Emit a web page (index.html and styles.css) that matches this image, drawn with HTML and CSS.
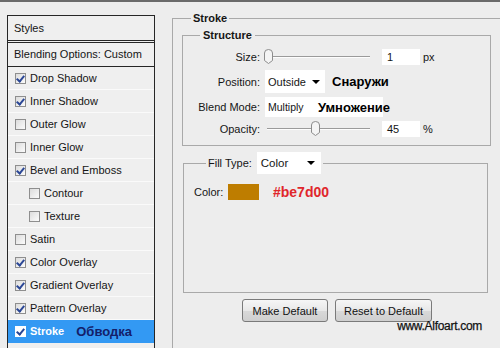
FILE: index.html
```html
<!DOCTYPE html>
<html>
<head>
<meta charset="utf-8">
<link rel="stylesheet" href="styles.css">
</head>
<body>
<div class="panel">
  <div class="head">Styles</div>
  <div class="blend">Blending Options: Custom</div>
  <div class="item"><span class="cb on"></span>Drop Shadow</div>
  <div class="item"><span class="cb on"></span>Inner Shadow</div>
  <div class="item"><span class="cb"></span>Outer Glow</div>
  <div class="item"><span class="cb"></span>Inner Glow</div>
  <div class="item"><span class="cb on"></span>Bevel and Emboss</div>
  <div class="item sub"><span class="cb"></span>Contour</div>
  <div class="item sub"><span class="cb"></span>Texture</div>
  <div class="item"><span class="cb"></span>Satin</div>
  <div class="item"><span class="cb on"></span>Color Overlay</div>
  <div class="item"><span class="cb on"></span>Gradient Overlay</div>
  <div class="item"><span class="cb on"></span>Pattern Overlay</div>
  <div class="item sel"><span class="cb on"></span><span class="selname">Stroke</span><span class="ru-sel">Обводка</span></div>
</div>
<div class="right">
  <fieldset class="outer">
    <legend class="lg">Stroke</legend>
    <fieldset class="structure">
      <legend class="lg lg2">Structure</legend>
      <div class="row r1">
        <span class="lbl">Size:</span>
        <div class="slider"><span class="track"></span><svg class="thumb" style="left:-1px" width="9" height="15" viewBox="0 0 9 15"><path d="M0.5 4 Q0.5 0.5 4.5 0.5 Q8.5 0.5 8.5 4 L8.5 11.5 L4.5 14.5 L0.5 11.5 Z" fill="#f4f4f4" stroke="#8c8c8c"/></svg></div>
        <span class="num">1</span><span class="unit">px</span>
      </div>
      <div class="row r2">
        <span class="lbl">Position:</span>
        <div class="dd pos">Outside<span class="arr"></span></div>
        <span class="ru">Снаружи</span>
      </div>
      <div class="row r3">
        <span class="lbl">Blend Mode:</span>
        <div class="dd mode"><span class="modev">Multiply</span><span class="ru">Умножение</span></div>
      </div>
      <div class="row r4">
        <span class="lbl">Opacity:</span>
        <div class="slider"><span class="track"></span><svg class="thumb" style="left:46px" width="9" height="15" viewBox="0 0 9 15"><path d="M0.5 4 Q0.5 0.5 4.5 0.5 Q8.5 0.5 8.5 4 L8.5 11.5 L4.5 14.5 L0.5 11.5 Z" fill="#f4f4f4" stroke="#8c8c8c"/></svg></div>
        <span class="num">45</span><span class="unit">%</span>
      </div>
    </fieldset>
    <fieldset class="fill">
      <legend class="fl"><span>Fill Type:</span><div class="dd ftype">Color<span class="arr"></span></div></legend>
      <div class="colorrow">
        <span class="clbl">Color:</span>
        <span class="swatch"></span>
        <span class="hex">#be7d00</span>
      </div>
    </fieldset>
    <div class="buttons">
      <button class="btn b1">Make Default</button>
      <button class="btn b2">Reset to Default</button>
    </div>
    <div class="credit">www.Alfoart.com</div>
  </fieldset>
</div>
</body>
</html>
```
FILE: styles.css
```css
html, body {
  margin: 0;
  padding: 0;
}
body {
  width: 500px;
  height: 348px;
  box-sizing: border-box;
  overflow: hidden;
  background: #ededed;
  border-top: 2px solid #6a6a6a;
  display: flex;
  align-items: flex-start;
  font-family: "Liberation Sans", Arial, sans-serif;
  font-size: 11px;
  color: #151515;
}
.panel {
  margin: 13px 0 0 7px;
  width: 148px;
  height: 333px;
  flex: none;
  box-sizing: border-box;
  border: 1px solid #262626;
  border-bottom: none;
  background: #efefef;
}
.head {
  height: 24px;
  line-height: 24px;
  padding-left: 6px;
  border-bottom: 1px solid #262626;
}
.blend {
  margin-top: 1px;
  border-top: 1px solid #262626;
  border-bottom: 1px solid #262626;
  height: 23px;
  line-height: 23px;
  padding-left: 6px;
}
.item {
  height: 22px;
  border-bottom: 1px solid #fafafa;
  display: flex;
  align-items: center;
  padding-left: 7px;
}
.item.sub {
  padding-left: 21px;
}
.cb {
  width: 11px;
  height: 11px;
  box-sizing: border-box;
  border: 1px solid #8e8e8e;
  background: linear-gradient(135deg, #dcdcdc, #fbfbfb);
  margin-right: 4px;
  flex: none;
  position: relative;
}
.cb.on::after {
  content: "";
  position: absolute;
  left: 2px;
  top: 0px;
  width: 3px;
  height: 6px;
  border-right: 2px solid #2b4796;
  border-bottom: 2px solid #2b4796;
  transform: rotate(40deg);
}
.item.sel {
  background: #3399f3;
  border-bottom-color: #3399f3;
}
.item.sel .cb {
  background: #fff;
  border-color: #fff;
}
.selname {
  color: #fff;
  font-weight: bold;
}
.ru-sel {
  margin-left: 12px;
  font-size: 13px;
  font-weight: bold;
  color: #14206a;
}
.right {
  flex: 1;
  margin-left: 17px;
  padding-top: 9px;
  min-width: 0;
}
fieldset {
  margin: 0;
  min-width: 0;
  box-sizing: border-box;
}
.outer {
  padding: 0 0 0 9px;
  border: 1px solid #a9a9a9;
  border-right: none;
  border-bottom: none;
  height: 337px;
}
.lg {
  font-weight: bold;
  line-height: 14px;
  padding: 0 2px;
  margin-left: 9px;
}
.lg2 {
  margin-left: 17px;
  padding: 0 3px;
}
.structure {
  margin-top: 3px;
  width: 309px;
  padding: 7px 0 8px 0;
  border: 1px solid #a9a9a9;
}
.row {
  display: flex;
  align-items: center;
}
.lbl {
  width: 77px;
  margin-right: 5px;
  text-align: right;
  flex: none;
}
.r1 { height: 16px; }
.r2 { height: 23px; margin-top: 5px; }
.r3 { height: 20px; margin-top: 4px; }
.r4 { height: 16px; margin-top: 4px; }
.slider {
  position: relative;
  width: 105px;
  height: 16px;
  flex: none;
}
.track {
  position: absolute;
  left: 2px;
  right: 0;
  top: 7px;
  height: 1px;
  background: #9a9a9a;
  border-bottom: 1px solid #fdfdfd;
}
.thumb {
  position: absolute;
  top: 0;
}
.num {
  margin-left: 12px;
  width: 38px;
  height: 16px;
  line-height: 16px;
  background: #fff;
  padding-left: 5px;
  box-sizing: border-box;
  flex: none;
}
.unit {
  margin-left: 3px;
}
.dd {
  background: #fff;
  display: flex;
  align-items: center;
  box-sizing: border-box;
  flex: none;
  position: relative;
}
.pos {
  width: 60px;
  height: 23px;
  padding-left: 3px;
}
.arr {
  margin-left: auto;
  margin-right: 5px;
  width: 0;
  height: 0;
  border-left: 4px solid transparent;
  border-right: 4px solid transparent;
  border-top: 4px solid #000;
}
.ru {
  font-size: 13px;
  font-weight: bold;
  color: #000;
  margin-left: 7px;
  white-space: nowrap;
}
.mode {
  width: 118px;
  height: 20px;
  padding-left: 3px;
  white-space: nowrap;
}
.modev {
  width: 50px;
  font-size: 10.5px;
  flex: none;
}
.mode .ru {
  margin-left: 0;
}
.fill {
  margin: 6px 0 0 1px;
  width: 305px;
  height: 141px;
  padding: 10px 0 0 10px;
  border: 1px solid #a9a9a9;
}
.fl {
  display: flex;
  align-items: center;
  margin-left: 12px;
  padding: 0 2px;
}
.ftype {
  margin-left: 5px;
  width: 64px;
  height: 22px;
  padding-left: 4px;
  font-size: 11.5px;
}
.ftype .arr {
  margin-right: 6px;
}
.colorrow {
  display: flex;
  align-items: center;
  height: 16px;
}
.clbl {
  width: 34px;
  flex: none;
}
.swatch {
  width: 31px;
  height: 16px;
  background: #be7d00;
  flex: none;
}
.hex {
  margin-left: 14px;
  font-size: 14px;
  font-weight: bold;
  color: #e0262b;
}
.buttons {
  display: flex;
  gap: 7px;
  margin: 6px 0 0 60px;
}
.btn {
  font-family: "Liberation Sans", Arial, sans-serif;
  font-size: 11px;
  color: #111;
  height: 23px;
  padding: 0;
  border: 1px solid #7a7a7a;
  border-radius: 3px;
  background: linear-gradient(#f6f6f6, #e8e8e8 50%, #d9d9d9 51%, #cfcfcf);
}
.b1 { width: 86px; }
.b2 { width: 97px; }
.credit {
  text-align: right;
  padding-right: 18px;
  margin-top: -3px;
  font-size: 12px;
  letter-spacing: -0.3px;
  color: #111;
  -webkit-text-stroke: 0.25px #111;
  line-height: 14px;
}
```
